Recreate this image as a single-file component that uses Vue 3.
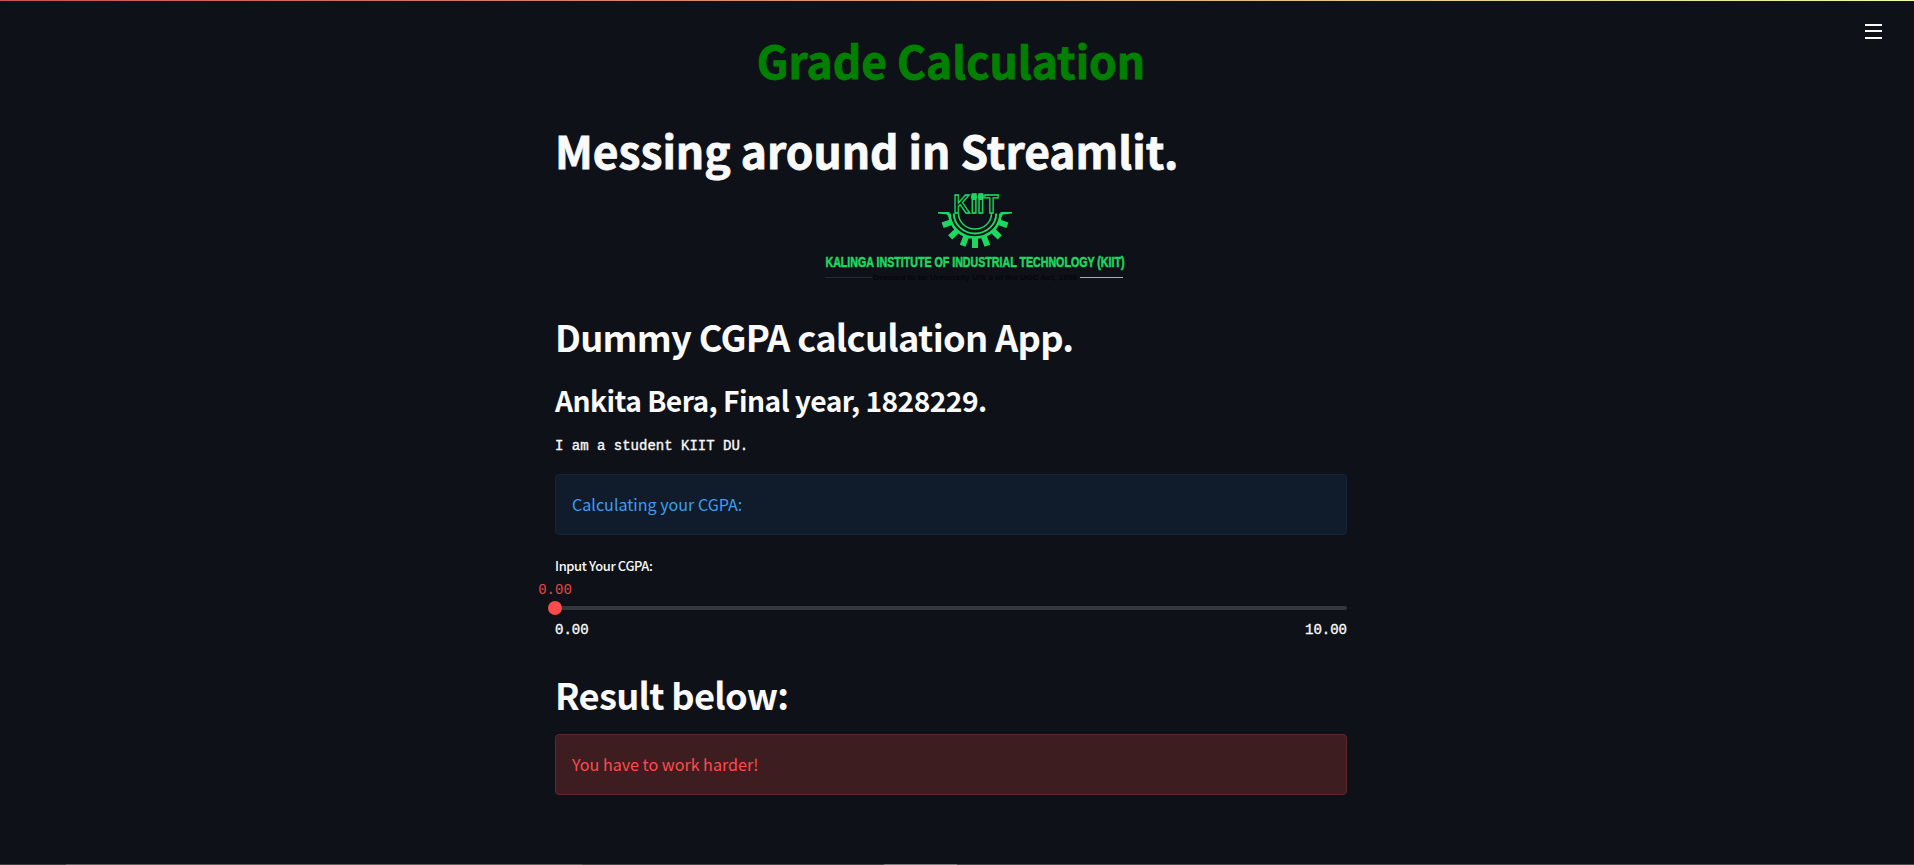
<script setup>
import { ref, computed } from 'vue'

const cgpa = ref(0)
const max = 10
const percent = computed(() => (cgpa.value / max) * 100 + '%')
const teeth = [-70, -46, -21, 0, 21, 46, 70]
</script>

<template>
  <div class="app">
    <div class="decoration"></div>
    <button class="menu" aria-label="Menu"><i></i><i></i><i></i></button>
    <main class="column">
      <h1 class="brand">Grade Calculation</h1>
      <h1 class="title">Messing around in Streamlit.</h1>
      <svg class="logo" width="350" height="100" viewBox="800 185 350 100">
        <g fill="none" stroke="#1ed760">
          <path d="M949.5 213.500a25.5 24 0 0 0 51 0" stroke-width="2.6" />
          <path d="M953.8 213.500a21.2 20 0 0 0 42.4 0" stroke-width="1.9" />
          <path d="M958.5 213.500a16.5 15.5 0 0 0 33 0" stroke-width="1.5" />
        </g>
        <g fill="#1ed760">
          <rect v-for="a in teeth" :key="a" x="972" y="237.5" width="6" height="10.500" :transform="`rotate(${a} 975 213.5)`" />
          <path d="M938 212h11.500v6.500l-2.500-4-9-1zM1012 212h-11.500v6.500l2.500-4 9-1z" />
        </g>
        <text class="mark" y="212.500"><tspan x="953.600" textLength="16.500" lengthAdjust="spacingAndGlyphs">K</tspan><tspan x="970.400">i</tspan><tspan x="977.200">i</tspan><tspan x="984.400" textLength="14" lengthAdjust="spacingAndGlyphs">T</tspan></text>
        <circle cx="974" cy="197" r="3.100" fill="#1ed760" />
        <circle cx="980.900" cy="197" r="3.100" fill="#1ed760" />
        <text class="institute" x="825.500" y="267.200" textLength="299" lengthAdjust="spacingAndGlyphs">KALINGA INSTITUTE OF INDUSTRIAL TECHNOLOGY (KIIT)</text>
        <text class="deemed" x="873" y="280" textLength="204" lengthAdjust="spacingAndGlyphs">Deemed to be University U/S 3 of the UGC Act, 1956</text>
        <rect x="825" y="277" width="47" height="1" fill="#242a35" />
        <rect x="1080" y="277" width="43" height="1" fill="#a9adb5" />
      </svg>
      <h2 class="header">Dummy CGPA calculation App.</h2>
      <h3 class="author">Ankita Bera, Final year, 1828229.</h3>
      <div class="note mono">I am a student KIIT DU.</div>
      <div class="alert info">Calculating your CGPA:</div>
      <label class="label">Input Your CGPA:</label>
      <div class="slider">
        <div class="thumb" :style="{ left: percent }">
          <span class="value mono">{{ cgpa.toFixed(2) }}</span>
        </div>
      </div>
      <div class="ticks mono"><span>0.00</span><span>{{ max.toFixed(2) }}</span></div>
      <h2 class="result">Result below:</h2>
      <div class="alert error">You have to work harder!</div>
    </main>
    <div class="edge"></div>
  </div>
</template>

<style>
body { background: #0e1117; overflow: hidden; }
</style>

<style scoped>
.app {
  position: relative;
  box-sizing: border-box;
  height: 865px;
  overflow: hidden;
  background: #0e1117;
  color: #fafafa;
  font-family: "Noto Sans CJK SC", "Noto Sans", sans-serif;
  white-space: nowrap;
}
.decoration {
  position: absolute;
  inset: 0 0 auto;
  height: 1px;
  background: linear-gradient(90deg, #c9525c, #e0a070 50%, #efffa0);
}
.edge {
  position: absolute;
  inset: auto 0 0;
  height: 1px;
  background: linear-gradient(90deg, #3b3f42 66px, #625c61 66px 582px, #414548 582px 884px, #777a7e 884px 957px, #46494c 957px);
}
.menu {
  position: absolute;
  top: 24px;
  right: 32px;
  display: flex;
  flex-direction: column;
  gap: 4.300px;
  width: 17px;
  padding: 0;
  border: 0;
  background: none;
}
.menu i { height: 2.100px; background: #fafafa; }
.column {
  display: flex;
  flex-direction: column;
  width: 792px;
  margin: 0 0 0 555px;
  padding: 30px 0 0;
}
h1, h2, h3 { margin: 0; }
h1 { font-size: 44.300px; line-height: 60px; font-weight: 700; -webkit-text-stroke: 0.8px currentColor; }
h2 { font-size: 36.300px; line-height: 50px; font-weight: 600; letter-spacing: -0.73px; }
.brand { color: #008000; text-align: center; }
.title { margin-top: 30px; }
.logo { margin: 5px 0 0 245px; overflow: visible; }
.header { margin-top: 26px; }
.author { margin-top: 19px; font-size: 28.200px; line-height: 40px; font-weight: 600; letter-spacing: -0.55px; }
.mono { font-family: "Liberation Mono", monospace; font-size: 14px; -webkit-text-stroke: 0.35px currentColor; }
.note { margin-top: 16px; height: 20px; line-height: 20px; }
.alert {
  box-sizing: border-box;
  height: 61px;
  padding-left: 16px;
  border: 1px solid;
  border-radius: 4px;
  font-size: 16.100px;
  line-height: 59px;
}
.info { margin-top: 18px; background: #101c2b; border-color: #15243a; color: #3d9df3; }
.error { margin-top: 15px; background: #3e1d20; border-color: #5d272e; color: #ff4b4b; }
.label { margin-top: 21px; font-size: 12.900px; line-height: 20px; font-weight: 500; letter-spacing: -0.35px; }
.slider { position: relative; height: 4px; margin-top: 30px; border-radius: 2px; background: #35373e; }
.thumb {
  position: absolute;
  top: -5px;
  width: 14px;
  height: 14px;
  margin-left: -7px;
  border-radius: 50%;
  background: #ff4b4b;
}
.value {
  position: absolute;
  bottom: 15px;
  left: 50%;
  line-height: 20px;
  color: #e9474b;
  transform: translateX(-50%);
  -webkit-text-stroke: 0;
}
.ticks { display: flex; justify-content: space-between; height: 20px; margin-top: 10px; line-height: 20px; }
.result { margin-top: 29px; }
.mark { font: bold 26px "Liberation Sans", sans-serif; fill: #0e1117; stroke: #1ed760; stroke-width: 1.400px; }
.institute { font: bold 14.500px "Liberation Sans", sans-serif; fill: #1ed760; stroke: #1ed760; stroke-width: 0.600px; }
.deemed { font: bold 8px "Liberation Sans", sans-serif; fill: #05070b; }
</style>
